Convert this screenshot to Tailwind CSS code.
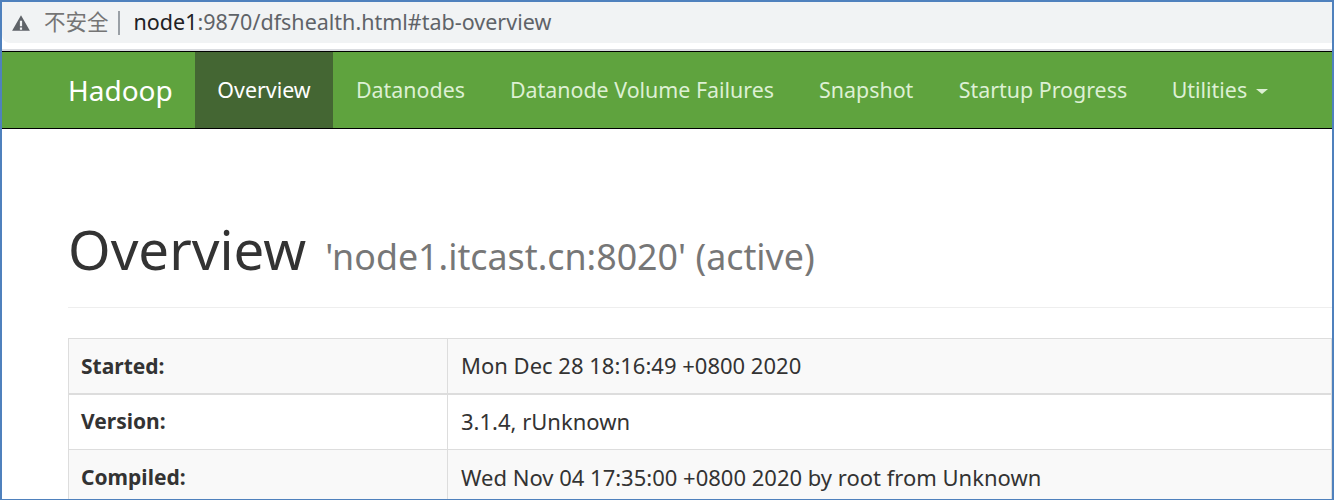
<!DOCTYPE html>
<html lang="en">
  <head>
    <meta charset="UTF-8" />
    <script src="https://cdn.jsdelivr.net/npm/@tailwindcss/browser@4"></script>
    <title>Namenode information</title>
  </head>
  <body class="h-[500px] overflow-hidden bg-white font-['Noto_Sans','Noto_Sans_CJK_SC',sans-serif]">
    <div class="h-[500px] overflow-hidden border-t-2 border-l-2 border-r-2 border-b border-[#4f81bd]">
      <!-- Address bar -->
      <div class="h-[41px] bg-[#f1f3f4] rounded-bl-lg flex items-center pl-[9px] text-[21.5px] text-[#5f6368]">
        <svg class="w-[20px] h-[18px] mr-[13px]" viewBox="0 0 18 16"><path d="M9 1 L17 15 H1 Z M8 6 V11 H10 V6 Z M8 12 V14 H10 V12 Z" fill="#5f6368" fill-rule="evenodd"/></svg>
        <span class="text-[#757575]">不安全</span>
        <span class="w-[2px] h-[24px] bg-[#9aa0a6] mx-[9px]"></span>
        <span class="ml-[5px]"><span class="text-[#202124]">node1</span>:9870/dfshealth.html#tab-overview</span>
      </div>
      <div class="h-[6px] bg-white"></div>
      <div class="h-[2px] bg-[#dadce0]"></div>

      <!-- Navbar -->
      <nav class="h-[78px] border-y border-black bg-[#5fa33e] flex pl-[45px] text-[21.4px] text-[#ddf0d4]">
        <a class="w-[148px] pl-[21px] flex items-center text-[28px] text-white">Hadoop</a>
        <a class="w-[138px] flex items-center justify-center bg-[#446633] text-white">Overview</a>
        <a class="px-[23px] flex items-center">Datanodes</a>
        <a class="px-[22px] flex items-center">Datanode Volume Failures</a>
        <a class="px-[23px] flex items-center">Snapshot</a>
        <a class="px-[22.5px] flex items-center">Startup Progress</a>
        <a class="px-[22px] flex items-center gap-[9px]">Utilities
          <span class="mt-[3px] border-x-[6px] border-t-[5px] border-x-transparent border-t-[#ddf0d4]"></span>
        </a>
      </nav>

      <!-- Content -->
      <main class="pl-[66px] text-[#333]">
        <div class="mt-[85px] pb-[23px] border-b border-[#eee] flex items-baseline whitespace-nowrap">
          <h1 class="text-[54.6px] leading-[70px]">Overview</h1>
          <span class="ml-[19px] text-[35.8px] text-[#777]">'node1.itcast.cn:8020' (active)</span>
        </div>
        <table class="mt-[30px] w-full border-collapse text-[22px]">
          <tbody>
            <tr class="h-[55px] bg-[#f9f9f9]">
              <th class="w-[379px] border border-[#ddd] border-b-2 pl-[12px] pt-[2px] text-left text-[21px] font-bold">Started:</th>
              <td class="border border-[#ddd] border-b-2 pl-[13px]">Mon Dec 28 18:16:49 +0800 2020</td>
            </tr>
            <tr class="h-[56px]">
              <th class="border border-[#ddd] pl-[12px] text-left text-[21px] font-bold">Version:</th>
              <td class="border border-[#ddd] pl-[13px]">3.1.4, rUnknown</td>
            </tr>
            <tr class="h-[55px] bg-[#f9f9f9]">
              <th class="border border-[#ddd] pl-[12px] pt-[2px] text-left text-[21px] font-bold">Compiled:</th>
              <td class="border border-[#ddd] pl-[13px]">Wed Nov 04 17:35:00 +0800 2020 by root from Unknown</td>
            </tr>
          </tbody>
        </table>
      </main>
    </div>
  </body>
</html>
